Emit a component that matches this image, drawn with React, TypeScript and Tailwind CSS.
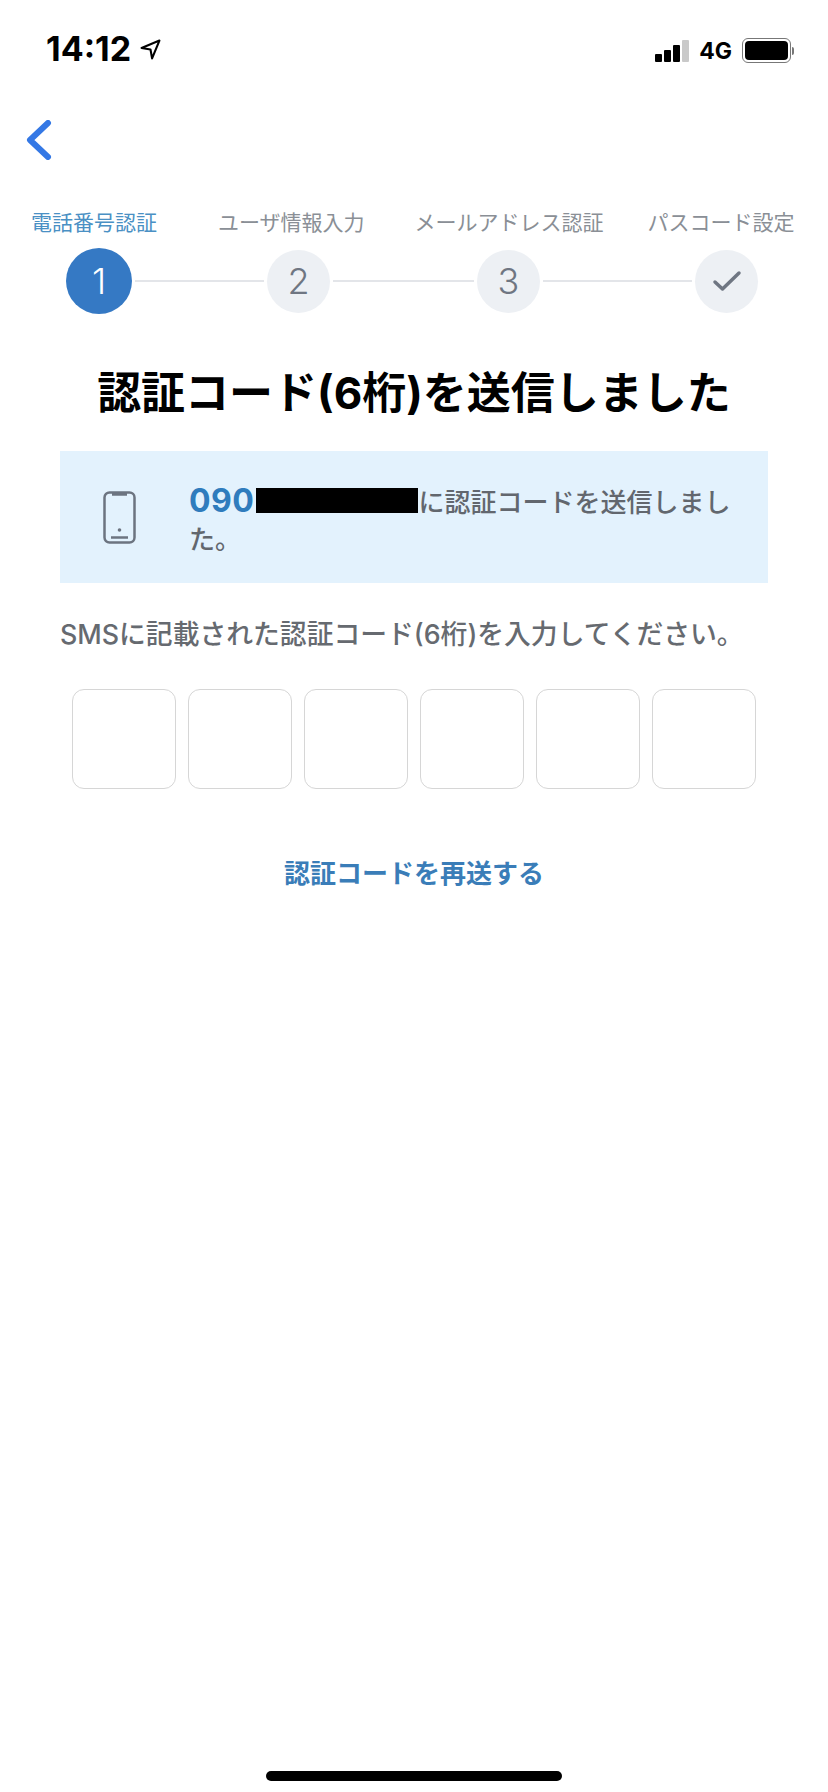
const jp = "font-['Inter','Noto_Sans_CJK_JP',sans-serif]";

const steps = [
  { label: '電話番号認証', cls: 'ml-[31px] text-[#4a90c4]' },
  { label: 'ユーザ情報入力', cls: 'ml-[61px] text-[#8a8f96]' },
  { label: 'メールアドレス認証', cls: 'ml-[50px] text-[#8a8f96]' },
  { label: 'パスコード設定', cls: 'ml-[44px] text-[#8a8f96]' },
];

function StatusBar() {
  return (
    <div className="flex h-[100px] items-start justify-between pl-[46px] pr-[34px] pt-[30px]">
      <div className="flex items-center gap-[9px]">
        <span className="text-[34px] font-bold leading-[38px] text-black">14:12</span>
        <svg width="21" height="21" viewBox="0 0 20 20" fill="none" stroke="#000" strokeWidth="2" strokeLinejoin="round">
          <path d="M1.5 8.5 L18.5 1.5 L11.5 18.5 L10 10 Z" />
        </svg>
      </div>
      <div className="mt-[8px] flex items-center">
        <div className="flex items-end gap-[2px]">
          <div className="h-[8px] w-[7px] rounded-[1px] bg-black" />
          <div className="h-[12px] w-[7px] rounded-[1px] bg-black" />
          <div className="h-[17px] w-[7px] rounded-[1px] bg-black" />
          <div className="h-[22px] w-[7px] rounded-[1px] bg-[#c9c9c9]" />
        </div>
        <span className="ml-[10px] text-[23px] font-bold leading-[24px] text-black">4G</span>
        <div className="ml-[10px] flex items-center">
          <div className="h-[25px] w-[49px] rounded-[6px] border-[1.5px] border-[#777] p-[2px]">
            <div className="h-full w-full rounded-[4px] bg-black" />
          </div>
          <div className="ml-[1px] h-[8px] w-[2px] rounded-r-[2px] bg-[#777]" />
        </div>
      </div>
    </div>
  );
}

function Circle({ children, active }: { children: React.ReactNode; active?: boolean }) {
  return (
    <div
      className={
        active
          ? 'grid h-[66px] w-[66px] shrink-0 place-items-center rounded-full bg-[#3579c4] text-[36px] font-light leading-none text-white'
          : 'grid h-[63px] w-[63px] shrink-0 place-items-center rounded-full bg-[#edf0f4] text-[36px] font-light leading-none text-[#6f7682]'
      }
    >
      {children}
    </div>
  );
}

export default function App() {
  return (
    <div className={`flex min-h-[1792px] w-[828px] flex-col bg-white ${jp}`}>
      <StatusBar />

      <div className="h-[60px] pl-[26px] pt-[20px]">
        <svg width="26" height="40" viewBox="0 0 26 40" fill="none" stroke="#3478e5" strokeWidth="6" strokeLinecap="round" strokeLinejoin="round">
          <path d="M22 3 L4 20 L22 37" />
        </svg>
      </div>

      <div className="mt-[49px] flex h-[28px] items-center text-[21px] leading-[28px]">
        {steps.map((s) => (
          <span key={s.label} className={`whitespace-nowrap ${s.cls}`}>{s.label}</span>
        ))}
      </div>

      <div className="ml-[66px] mt-[11px] flex items-center">
        <Circle active>1</Circle>
        <div className="mx-[3px] h-[2px] w-[129px] bg-[#e3e5e9]" />
        <Circle>2</Circle>
        <div className="mx-[3px] h-[2px] w-[141px] bg-[#e3e5e9]" />
        <Circle>3</Circle>
        <div className="mx-[3px] h-[2px] w-[149px] bg-[#e3e5e9]" />
        <Circle>
          <svg width="30" height="24" viewBox="0 0 30 24" fill="none" stroke="#6f7682" strokeWidth="3.5" strokeLinecap="round" strokeLinejoin="round">
            <path d="M3 13 L10.5 20 L27 4" />
          </svg>
        </Circle>
      </div>

      <h1 className="mt-[51px] whitespace-nowrap text-center text-[44px] font-bold leading-[56px] text-black">認証コード(6桁)を送信しました</h1>

      <div className="mx-[60px] mt-[30px] flex h-[132px] items-start bg-[#e3f2fd] pt-[33px]">
        <div className="ml-[43px] mt-[7px] w-[86px] shrink-0">
          <svg width="33" height="53" viewBox="0 0 33 53" fill="none" stroke="#6c7480" strokeWidth="2.5">
            <rect x="1.5" y="1.5" width="30" height="50" rx="5" />
            <path d="M9 3 H24" strokeWidth="3.5" />
            <circle cx="16.5" cy="39" r="1.8" fill="#6c7480" stroke="none" />
            <path d="M8 46.5 H25" />
          </svg>
        </div>
        <p className="pr-[24px] text-[26px] font-medium leading-[37px] text-[#62676e]">
          <span className="text-[32px] font-bold leading-none tracking-[0.5px] text-[#2f7cbd]">090</span>
          <span className="ml-[2px] inline-block h-[25px] w-[162px] translate-y-[1px] bg-black" />
          に認証コードを送信しました。
        </p>
      </div>

      <p className="ml-[60px] mt-[32px] whitespace-nowrap text-[26.8px] font-medium leading-[38px] text-[#666a70]">
        SMSに記載された認証コード(6桁)を入力してください。
      </p>

      <div className="ml-[72px] mt-[36px] flex gap-[12px]">
        {[0, 1, 2, 3, 4, 5].map((i) => (
          <div key={i} className="h-[100px] w-[104px] rounded-[12px] border-[1.5px] border-[#d6d6d6] bg-white" />
        ))}
      </div>

      <p className="mt-[66px] text-center text-[26px] font-bold leading-[38px] text-[#3a7db8]">認証コードを再送する</p>

      <div className="mt-auto flex justify-center pb-[11px]">
        <div className="h-[10px] w-[296px] rounded-full bg-black" />
      </div>
    </div>
  );
}
